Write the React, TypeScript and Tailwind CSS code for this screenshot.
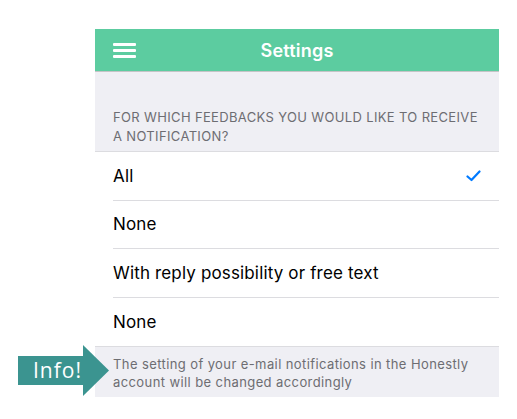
import React from "react";

export default function App() {
  const rows = ["All", "None", "With reply possibility or free text", "None"];
  return (
    <div
      className="relative w-[517px] h-[419px] bg-white pt-[29px] pl-[95px]"
      style={{ fontFamily: "Inter, 'Noto Sans', sans-serif" }}
    >
      <div className="w-[404px] flex flex-col">
        <div className="h-[43px] bg-[#5ccca0] border-b border-[#c4c4c6] flex items-center relative">
          <div className="ml-[18px] flex flex-col gap-[3px]">
            <div className="w-[23px] h-[3px] bg-white rounded-[1px]" />
            <div className="w-[23px] h-[3px] bg-white rounded-[1px]" />
            <div className="w-[23px] h-[3px] bg-white rounded-[1px]" />
          </div>
          <div className="absolute inset-0 flex items-center justify-center text-white text-[18px] font-semibold tracking-[0.2px]">
            Settings
          </div>
        </div>
        <div className="bg-[#efeff4] pt-[36px] pb-[5px] px-[18px] text-[13px] leading-[19px] text-[#6d6d72] tracking-[0.35px]">
          FOR WHICH FEEDBACKS YOU WOULD LIKE TO RECEIVE A NOTIFICATION?
        </div>
        <div className="bg-white border-t border-[#dcdce0]">
          {rows.map((r, i) => (
            <div key={i} className="pl-[18px]">
              <div
                className={
                  "h-[48.5px] flex items-center justify-between pr-[18px] text-[17px] text-black tracking-[0.15px] " +
                  (i < rows.length - 1 ? "border-b border-[#dcdce0]" : "")
                }
              >
                <span className="pt-[1px]">{r}</span>
                {i === 0 && (
                  <svg width="15" height="12" viewBox="0 0 15 12">
                    <path d="M1.5 6.5 L5.5 10 L13.5 1.5" fill="none" stroke="#007aff" strokeWidth="2.2" strokeLinecap="round" strokeLinejoin="round" />
                  </svg>
                )}
              </div>
            </div>
          ))}
        </div>
        <div className="bg-[#efeff4] border-t border-[#dcdce0] h-[51px] px-[18px] pt-[8px] text-[13px] leading-[18px] text-[#6d6d72] tracking-[0.4px]">
          The setting of your e-mail notifications in the Honestly account will be changed accordingly
        </div>
      </div>
      <div className="absolute left-[18px] top-[345px] flex items-center">
        <div
          className="w-[65px] h-[29px] bg-[#3b9490] flex items-center justify-center pl-[14px] text-white text-[21px] leading-none tracking-[1px]"
          style={{ fontFamily: "'Open Sans', sans-serif" }}
        >
          Info!
        </div>
        <svg width="26" height="51" viewBox="0 0 26 51" className="block">
          <polygon points="0,0 26,25.5 0,51" fill="#3b9490" />
        </svg>
      </div>
    </div>
  );
}
